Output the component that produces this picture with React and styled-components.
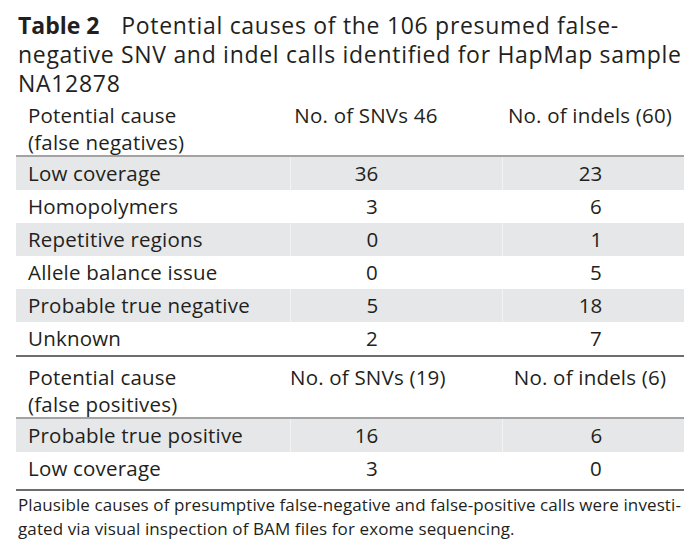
import React from 'react';
import styled, { createGlobalStyle } from 'styled-components';

const GlobalStyle = createGlobalStyle`
  body {
    margin: 0;
    background: #fff;
    color: #231f20;
    font-family: "Open Sans", "Noto Sans", sans-serif;
  }
`;

const Page = styled.div`
  width: 700px;
  height: 550px;
  padding: 11px 0 0 16px;
  box-sizing: border-box;
  overflow: hidden;
`;

const Caption = styled.h2`
  margin: 0 0 0 2px;
  font-size: 23px;
  font-weight: 400;
  line-height: 29px;
  letter-spacing: 0.7px;
  white-space: nowrap;
`;

const Label = styled.span`
  font-weight: 700;
  letter-spacing: 0;
  margin-right: 15px;
`;

const Table = styled.div`
  width: 668px;
  font-size: 20.5px;
  letter-spacing: 0.2px;
`;

const Section = styled.div`
  border-bottom: 2px solid #6d6d6d;
  padding-bottom: ${p => p.$pad || 0}px;
`;

const Row = styled.div`
  display: grid;
  grid-template-columns: 274px 212px 182px;
  height: ${p => (p.$head ? 'auto' : '33px')};
  line-height: ${p => (p.$head ? '26.5px' : '33px')};
  background: ${p => (p.$shaded ? '#e6e7e8' : 'transparent')};
  padding-top: ${p => (p.$head ? p.$top : 0)}px;
  border-bottom: ${p => (p.$head ? '2px solid #a3a3a3' : 'none')};
`;

const Cause = styled.div`
  padding-left: 12px;
  white-space: nowrap;
`;

const Count = styled.div`
  text-align: center;
  padding-right: ${p => p.$pr}px;
  white-space: nowrap;
  border-left: ${p => (p.$shaded ? '1px solid #f3f3f4' : 'none')};
`;

const Num = styled.span`
  display: inline-block;
  min-width: 24px;
  text-align: right;
`;

const Footnote = styled.p`
  margin: 2px 0 0 2px;
  font-size: 17px;
  line-height: 24px;
  letter-spacing: 0.1px;
  white-space: nowrap;
`;

const sections = [
  {
    top: 4,
    head: ['Potential cause', '(false negatives)', 'No. of SNVs 46', 'No. of indels (60)'],
    rows: [
      ['Low coverage', 36, 23],
      ['Homopolymers', 3, 6],
      ['Repetitive regions', 0, 1],
      ['Allele balance issue', 0, 5],
      ['Probable true negative', 5, 18],
      ['Unknown', 2, 7],
    ],
  },
  {
    top: 7,
    pad: 4,
    head: ['Potential cause', '(false positives)', 'No. of SNVs (19)', 'No. of indels (6)'],
    rows: [
      ['Probable true positive', 16, 6],
      ['Low coverage', 3, 0],
    ],
  },
];

const App = () => (
  <Page>
    <GlobalStyle />
    <Caption>
      <Label>Table 2</Label> Potential causes of the 106 presumed false-<br />
      negative SNV and indel calls identified for HapMap sample<br />
      NA12878
    </Caption>
    <Table>
      {sections.map((s, si) => (
        <Section key={si} $pad={s.pad}>
          <Row $head $top={s.top}>
            <Cause>{s.head[0]}<br />{s.head[1]}</Cause>
            <Count $pr={60}>{s.head[2]}</Count>
            <Count $pr={6}>{s.head[3]}</Count>
          </Row>
          {s.rows.map((r, i) => (
            <Row key={r[0]} $shaded={i % 2 === 0}>
              <Cause>{r[0]}</Cause>
              <Count $pr={60} $shaded={i % 2 === 0}><Num>{r[1]}</Num></Count>
              <Count $pr={6} $shaded={i % 2 === 0}><Num>{r[2]}</Num></Count>
            </Row>
          ))}
        </Section>
      ))}
    </Table>
    <Footnote>
      Plausible causes of presumptive false-negative and false-positive calls were investi-<br />
      gated via visual inspection of BAM files for exome sequencing.
    </Footnote>
  </Page>
);

export default App;
